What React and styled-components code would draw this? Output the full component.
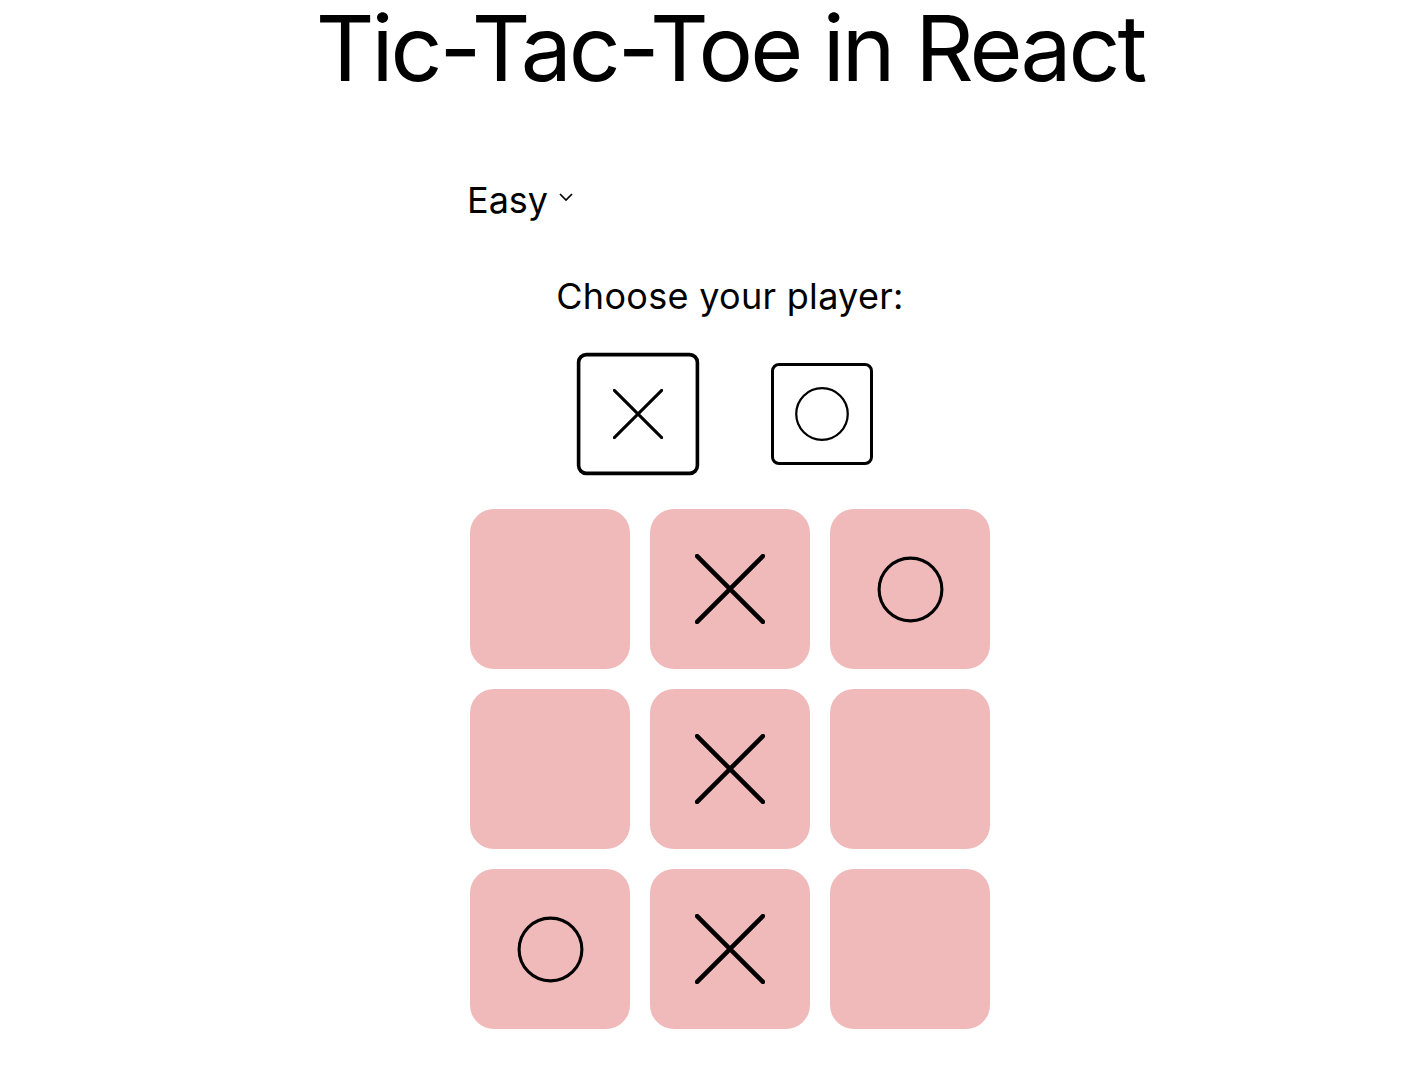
import React, { useState } from 'react';
import styled, { createGlobalStyle } from 'styled-components';

const GlobalStyle = createGlobalStyle`
    body {
        margin: 0;
        background: #fff;
        color: #000;
        font-family: Inter, "Noto Sans", sans-serif;
    }
`;

const XMark = ({ size, stroke }) => (
    <svg width={size} height={size} viewBox="0 0 100 100">
        <path d="M3 3 L97 97 M97 3 L3 97" stroke="#000" strokeWidth={stroke} strokeLinecap="round" fill="none" />
    </svg>
);

const OMark = ({ size, stroke }) => (
    <svg width={size} height={size} viewBox="0 0 100 100">
        <circle cx="50" cy="50" r={50 - stroke} stroke="#000" strokeWidth={stroke} fill="none" />
    </svg>
);

export default function App() {
    const [player, setPlayer] = useState('X');
    const board = ['', 'X', 'O', '', 'X', '', 'O', 'X', ''];

    return (
        <Page>
            <GlobalStyle />
            <Title>Tic-Tac-Toe in React</Title>
            <Controls>
                <Difficulty>
                    Easy
                    <svg width="16" height="10" viewBox="0 0 16 10">
                        <path d="M2 2 L8 8 L14 2" stroke="#000" strokeWidth="1.6" fill="none" />
                    </svg>
                </Difficulty>
            </Controls>
            <Prompt>Choose your player:</Prompt>
            <Picker>
                <PickBtn $active={player === 'X'} onClick={() => setPlayer('X')}>
                    <XMark size={42} stroke={6} />
                </PickBtn>
                <PickBtn $active={player === 'O'} onClick={() => setPlayer('O')}>
                    <OMark size={56} stroke={4} />
                </PickBtn>
            </Picker>
            <Board>
                {board.map((c, i) => (
                    <Cell key={i}>
                        {c === 'X' && <XMark size={70} stroke={6.5} />}
                        {c === 'O' && <OMark size={69} stroke={4.5} />}
                    </Cell>
                ))}
            </Board>
        </Page>
    );
}

const Page = styled.div`
    display: flex;
    flex-direction: column;
    align-items: center;
    padding-left: 36px;
`;

const Title = styled.h1`
    margin: 0;
    font-size: 91px;
    font-weight: 400;
    line-height: 96px;
    letter-spacing: -3px;
`;

const Controls = styled.div`
    width: 520px;
    margin-top: 82px;
    display: flex;
`;

const Difficulty = styled.div`
    display: flex;
    align-items: center;
    gap: 10px;
    font-size: 36px;
    line-height: 44px;
    margin-left: -3px;
    cursor: pointer;
    svg {
        margin-top: -6px;
    }
`;

const Prompt = styled.div`
    margin-top: 52px;
    font-size: 36px;
    line-height: 44px;
    letter-spacing: 0.3px;
`;

const Picker = styled.div`
    display: flex;
    align-items: center;
    gap: 82px;
    margin-top: 34px;
    height: 124px;
`;

const PickBtn = styled.button`
    width: 102px;
    height: 102px;
    box-sizing: border-box;
    border: 3px solid #000;
    border-radius: 8px;
    background: #fff;
    display: flex;
    align-items: center;
    justify-content: center;
    padding: 0;
    cursor: pointer;
    transform: ${p => (p.$active ? 'scale(1.2)' : 'none')};
`;

const Board = styled.div`
    display: grid;
    grid-template-columns: repeat(3, 160px);
    grid-auto-rows: 160px;
    gap: 20px;
    margin-top: 33px;
`;

const Cell = styled.div`
    background: #f0babb;
    border-radius: 24px;
    display: flex;
    align-items: center;
    justify-content: center;
`;
